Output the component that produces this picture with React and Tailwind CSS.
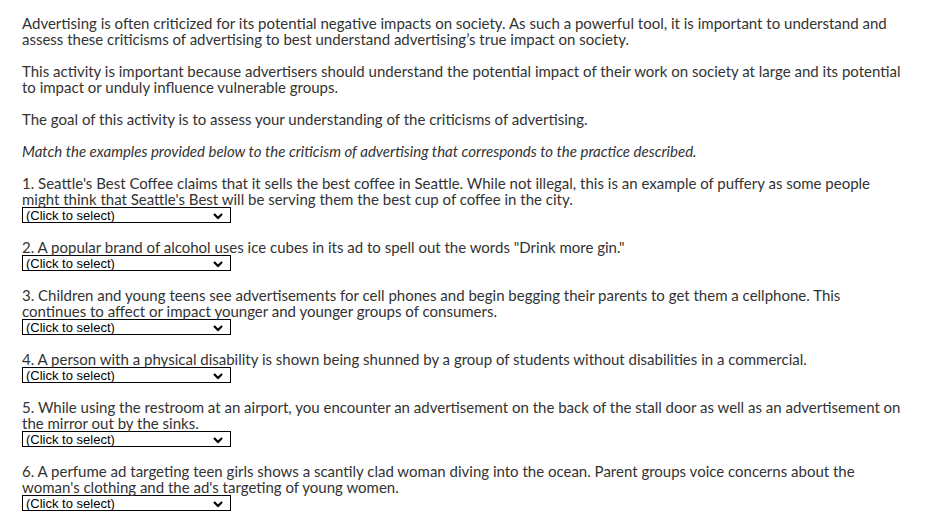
import React from "react";

const items = [
  "1. Seattle's Best Coffee claims that it sells the best coffee in Seattle. While not illegal, this is an example of puffery as some people might think that Seattle's Best will be serving them the best cup of coffee in the city.",
  '2. A popular brand of alcohol uses ice cubes in its ad to spell out the words "Drink more gin."',
  "3. Children and young teens see advertisements for cell phones and begin begging their parents to get them a cellphone. This continues to affect or impact younger and younger groups of consumers.",
  "4. A person with a physical disability is shown being shunned by a group of students without disabilities in a commercial.",
  "5. While using the restroom at an airport, you encounter an advertisement on the back of the stall door as well as an advertisement on the mirror out by the sinks.",
  "6. A perfume ad targeting teen girls shows a scantily clad woman diving into the ocean. Parent groups voice concerns about the woman's clothing and the ad's targeting of young women.",
];

function Select() {
  return (
    <div className="flex items-center justify-between w-[209px] h-[16px] border border-black bg-white pl-[3px] pr-[7px] font-['Liberation_Sans',Arial,sans-serif] text-[13px] leading-none text-black">
      <span>(Click to select)</span>
      <svg width="10" height="7" viewBox="0 0 10 7" className="mt-[2px]">
        <polyline points="1,1 5,5 9,1" fill="none" stroke="black" strokeWidth="2.2" />
      </svg>
    </div>
  );
}

export default function App() {
  return (
    <div className="bg-white min-h-screen pl-[22px] pr-[34px] pt-[15px] font-['Lato',sans-serif] text-[15px] leading-[16px] text-[#333]">
      <p>
        Advertising is often criticized for its potential negative impacts on society. As such a powerful tool, it is important to understand and assess these criticisms of advertising to best understand advertising’s true impact on society.
      </p>
      <p className="mt-4">
        This activity is important because advertisers should understand the potential impact of their work on society at large and its potential to impact or unduly influence vulnerable groups.
      </p>
      <p className="mt-4">The goal of this activity is to assess your understanding of the criticisms of advertising.</p>
      <p className="mt-4 italic">
        Match the examples provided below to the criticism of advertising that corresponds to the practice described.
      </p>
      {items.map((t) => (
        <div key={t} className="mt-4">
          <p>{t}</p>
          <Select />
        </div>
      ))}
    </div>
  );
}
